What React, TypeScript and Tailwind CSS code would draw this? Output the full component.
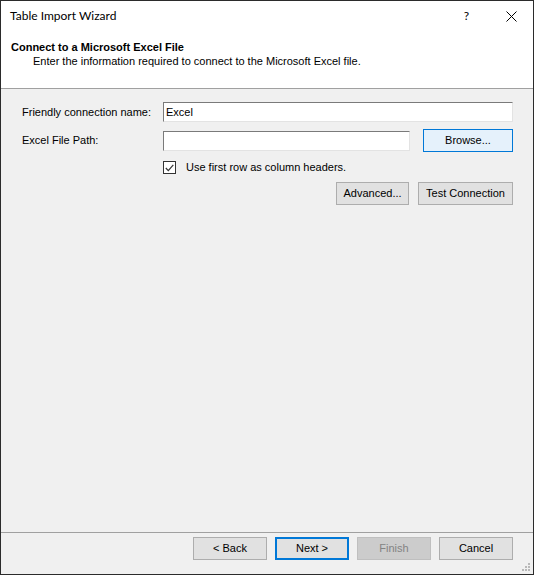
import React from "react";

function WinButton({
  children,
  variant = "normal",
  className = "",
}: {
  children: React.ReactNode;
  variant?: "normal" | "hover" | "default" | "disabled";
  className?: string;
}) {
  const styles = {
    normal: "border border-[#adadad] bg-[#e1e1e1] text-black",
    hover: "border border-[#0078d7] bg-[#e5f1fb] text-black",
    default: "border-2 border-[#0078d7] bg-[#e1e1e1] text-black",
    disabled: "border border-[#bfbfbf] bg-[#cccccc] text-[#838383]",
  }[variant];
  return (
    <button
      className={`flex h-[23px] items-center justify-center text-[11px] leading-none ${styles} ${className}`}
    >
      {children}
    </button>
  );
}

function TextBox({ value, className = "" }: { value?: string; className?: string }) {
  return (
    <div
      className={`flex h-[20px] items-center border border-b-[#e3e3e3] border-l-[#7a7a7a] border-r-[#e3e3e3] border-t-[#7a7a7a] bg-white pl-[2px] text-[11px] text-black ${className}`}
    >
      {value}
    </div>
  );
}

export default function App() {
  return (
    <div
      className="relative flex h-[575px] w-[534px] flex-col border border-[#2b2b2b] bg-[#f0f0f0]"
      style={{ fontFamily: '"Liberation Sans", Arial, sans-serif' }}
    >
      {/* title bar */}
      <div className="flex h-[30px] items-center bg-white pl-[9px] pr-[16px]">
        <span
          className="flex-1 text-[12px] text-black"
          style={{ fontFamily: 'Lato, "Noto Sans", sans-serif' }}
        >
          Table Import Wizard
        </span>
        <span
          className="mr-[37px] text-[12px] text-black"
          style={{ fontFamily: 'Lato, "Noto Sans", sans-serif' }}
        >
          ?
        </span>
        <svg width="11" height="11" viewBox="0 0 11 11" className="text-black">
          <path d="M0.5 0.5 L10.5 10.5 M10.5 0.5 L0.5 10.5" stroke="currentColor" strokeWidth="1" />
        </svg>
      </div>

      {/* header */}
      <div className="h-[58px] border-b border-[#a0a0a0] bg-white pl-[10px] pt-[10px]">
        <p className="text-[11px] font-bold leading-[13px] text-black">
          Connect to a Microsoft Excel File
        </p>
        <p className="mt-[1px] pl-[22px] text-[11px] leading-[13px] text-black">
          Enter the information required to connect to the Microsoft Excel file.
        </p>
      </div>

      {/* body */}
      <div className="flex-1 pl-[21px] pr-[20px] pt-[13px] text-[11px] text-black">
        <div className="flex h-[20px] items-center">
          <span className="w-[141px]">Friendly connection name:</span>
          <TextBox value="Excel" className="flex-1" />
        </div>
        <div className="mt-[7px] flex h-[23px] items-center">
          <span className="w-[141px]">Excel File Path:</span>
          <TextBox className="w-[247px]" />
          <WinButton variant="hover" className="ml-auto w-[90px]">
            Browse...
          </WinButton>
        </div>
        <div className="ml-[141px] mt-[9px] flex h-[13px] items-center">
          <div className="flex h-[13px] w-[13px] items-center justify-center border border-[#333333] bg-white">
            <svg width="9" height="8" viewBox="0 0 9 8">
              <path d="M0.8 4 L3.3 6.6 L8.3 0.8" fill="none" stroke="#333333" strokeWidth="1.2" />
            </svg>
          </div>
          <span className="ml-[10px]">Use first row as column headers.</span>
        </div>
        <div className="mt-[8px] flex justify-end gap-[9px]">
          <WinButton className="w-[73px]">Advanced...</WinButton>
          <WinButton className="w-[95px]">Test Connection</WinButton>
        </div>
      </div>

      {/* footer */}
      <div className="flex justify-end gap-[8px] border-t border-[#a0a0a0] pb-[14px] pr-[20px] pt-[4px]">
        <WinButton className="w-[74px]">&lt; Back</WinButton>
        <WinButton variant="default" className="w-[74px]">
          Next &gt;
        </WinButton>
        <WinButton variant="disabled" className="w-[74px]">
          Finish
        </WinButton>
        <WinButton className="w-[74px]">Cancel</WinButton>
      </div>

      {/* size grip */}
      <svg
        width="10"
        height="10"
        viewBox="0 0 10 10"
        className="absolute bottom-[2px] right-[2px]"
      >
        <rect x="7" y="1" width="2" height="2" fill="#b8b8b8" />
        <rect x="4" y="4" width="2" height="2" fill="#b8b8b8" />
        <rect x="7" y="4" width="2" height="2" fill="#b8b8b8" />
        <rect x="1" y="7" width="2" height="2" fill="#b8b8b8" />
        <rect x="4" y="7" width="2" height="2" fill="#b8b8b8" />
        <rect x="7" y="7" width="2" height="2" fill="#b8b8b8" />
      </svg>
    </div>
  );
}
